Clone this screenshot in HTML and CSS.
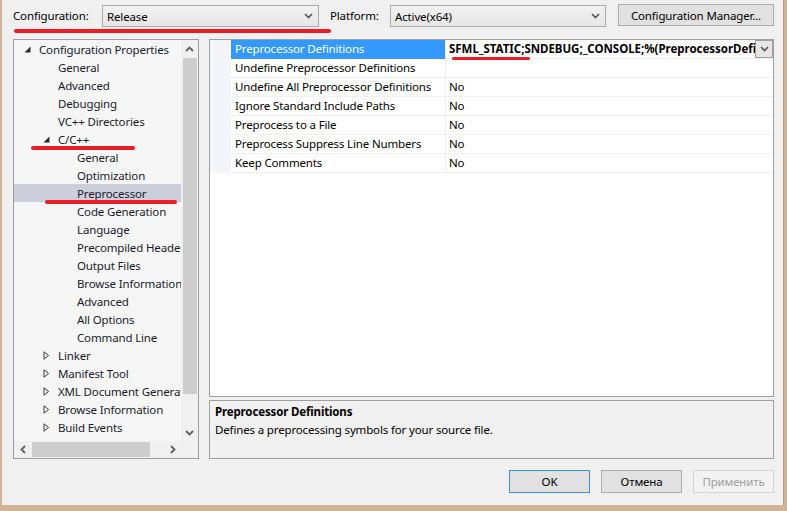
FILE: index.html
```html
<!DOCTYPE html>
<html>
<head>
<meta charset="utf-8">
<title>Property Pages</title>
<link rel="stylesheet" href="styles.css">
</head>
<body>
<div class="window">
  <div class="topbar">
    <span class="lbl lbl-config">Configuration:</span>
    <div class="combo combo-config">
      <span>Release</span>
      <svg class="chev" width="9" height="6" viewBox="0 0 9 6"><polyline points="1,1 4.5,4.5 8,1" fill="none" stroke="#555" stroke-width="1.6"/></svg>
    </div>
    <span class="lbl lbl-platform">Platform:</span>
    <div class="combo combo-platform">
      <span>Active(x64)</span>
      <svg class="chev" width="9" height="6" viewBox="0 0 9 6"><polyline points="1,1 4.5,4.5 8,1" fill="none" stroke="#555" stroke-width="1.6"/></svg>
    </div>
    <button class="btn btn-mgr">Configuration Manager...</button>
  </div>

  <div class="main">
    <div class="tree">
      <div class="tree-content">
        <div class="trow l1"><span class="exp"><svg width="7" height="7" viewBox="0 0 7 7"><polygon points="6.5,0.5 6.5,6.5 0.5,6.5" fill="#2a2a2a"/></svg></span><span>Configuration Properties</span></div>
        <div class="trow l2"><span class="exp"></span><span>General</span></div>
        <div class="trow l2"><span class="exp"></span><span>Advanced</span></div>
        <div class="trow l2"><span class="exp"></span><span>Debugging</span></div>
        <div class="trow l2"><span class="exp"></span><span>VC++ Directories</span></div>
        <div class="trow l2"><span class="exp"><svg width="7" height="7" viewBox="0 0 7 7"><polygon points="6.5,0.5 6.5,6.5 0.5,6.5" fill="#2a2a2a"/></svg></span><span>C/C++</span></div>
        <div class="trow l3"><span class="exp"></span><span>General</span></div>
        <div class="trow l3"><span class="exp"></span><span>Optimization</span></div>
        <div class="trow l3 sel"><span class="exp"></span><span>Preprocessor</span></div>
        <div class="trow l3"><span class="exp"></span><span>Code Generation</span></div>
        <div class="trow l3"><span class="exp"></span><span>Language</span></div>
        <div class="trow l3"><span class="exp"></span><span>Precompiled Headers</span></div>
        <div class="trow l3"><span class="exp"></span><span>Output Files</span></div>
        <div class="trow l3"><span class="exp"></span><span>Browse Information</span></div>
        <div class="trow l3"><span class="exp"></span><span>Advanced</span></div>
        <div class="trow l3"><span class="exp"></span><span>All Options</span></div>
        <div class="trow l3"><span class="exp"></span><span>Command Line</span></div>
        <div class="trow l2"><span class="exp"><svg width="7" height="9" viewBox="0 0 7 9"><polygon points="1,0.8 5.6,4.5 1,8.2" fill="none" stroke="#3a3a3a" stroke-width="1"/></svg></span><span>Linker</span></div>
        <div class="trow l2"><span class="exp"><svg width="7" height="9" viewBox="0 0 7 9"><polygon points="1,0.8 5.6,4.5 1,8.2" fill="none" stroke="#3a3a3a" stroke-width="1"/></svg></span><span>Manifest Tool</span></div>
        <div class="trow l2"><span class="exp"><svg width="7" height="9" viewBox="0 0 7 9"><polygon points="1,0.8 5.6,4.5 1,8.2" fill="none" stroke="#3a3a3a" stroke-width="1"/></svg></span><span>XML Document Generator</span></div>
        <div class="trow l2"><span class="exp"><svg width="7" height="9" viewBox="0 0 7 9"><polygon points="1,0.8 5.6,4.5 1,8.2" fill="none" stroke="#3a3a3a" stroke-width="1"/></svg></span><span>Browse Information</span></div>
        <div class="trow l2"><span class="exp"><svg width="7" height="9" viewBox="0 0 7 9"><polygon points="1,0.8 5.6,4.5 1,8.2" fill="none" stroke="#3a3a3a" stroke-width="1"/></svg></span><span>Build Events</span></div>
      </div>
      <div class="vscroll">
        <div class="arrow"><svg width="9" height="6" viewBox="0 0 9 6"><polyline points="1,5 4.5,1.5 8,5" fill="none" stroke="#606060" stroke-width="1.8"/></svg></div>
        <div class="vtrack"><div class="vthumb"></div></div>
        <div class="arrow"><svg width="9" height="6" viewBox="0 0 9 6"><polyline points="1,1 4.5,4.5 8,1" fill="none" stroke="#606060" stroke-width="1.8"/></svg></div>
      </div>
      <div class="hscroll">
        <div class="arrow"><svg width="6" height="9" viewBox="0 0 6 9"><polyline points="5,1 1.5,4.5 5,8" fill="none" stroke="#606060" stroke-width="1.8"/></svg></div>
        <div class="htrack"><div class="hthumb"></div></div>
        <div class="arrow"><svg width="6" height="9" viewBox="0 0 6 9"><polyline points="1,1 4.5,4.5 1,8" fill="none" stroke="#606060" stroke-width="1.8"/></svg></div>
      </div>
      <div class="corner"></div>
    </div>

    <div class="right">
      <div class="grid">
        <div class="grow hl"><div class="gut"></div><div class="gname">Preprocessor Definitions</div><div class="gval"><span class="vtext bold">SFML_STATIC;SNDEBUG;_CONSOLE;%(PreprocessorDefinitions)</span><span class="vbtn"><svg width="9" height="6" viewBox="0 0 9 6"><polyline points="1,1 4.5,4.5 8,1" fill="none" stroke="#555" stroke-width="1.6"/></svg></span></div></div>
        <div class="grow"><div class="gut"></div><div class="gname">Undefine Preprocessor Definitions</div><div class="gval"></div></div>
        <div class="grow"><div class="gut"></div><div class="gname">Undefine All Preprocessor Definitions</div><div class="gval">No</div></div>
        <div class="grow"><div class="gut"></div><div class="gname">Ignore Standard Include Paths</div><div class="gval">No</div></div>
        <div class="grow"><div class="gut"></div><div class="gname">Preprocess to a File</div><div class="gval">No</div></div>
        <div class="grow"><div class="gut"></div><div class="gname">Preprocess Suppress Line Numbers</div><div class="gval">No</div></div>
        <div class="grow"><div class="gut"></div><div class="gname">Keep Comments</div><div class="gval">No</div></div>
      </div>
      <div class="desc">
        <div class="desc-title">Preprocessor Definitions</div>
        <div class="desc-text">Defines a preprocessing symbols for your source file.</div>
      </div>
    </div>
  </div>

  <div class="footer">
    <button class="btn dlg default">OK</button>
    <button class="btn dlg">Отмена</button>
    <button class="btn dlg disabled">Применить</button>
  </div>

  <div class="mark mark-config"></div>
  <div class="mark mark-cpp"></div>
  <div class="mark mark-pre"></div>
  <div class="mark mark-sfml"></div>
</div>
</body>
</html>
```

FILE: styles.css
```css
* { box-sizing: border-box; }
html, body { margin: 0; padding: 0; }
body {
  background: #d1b396;
  width: 787px;
  height: 511px;
  overflow: hidden;
  font-family: "Noto Sans", "Open Sans", sans-serif;
  font-size: 11.5px;
  letter-spacing: -0.15px;
  color: #000;
}
.window {
  position: relative;
  margin-left: 2px;
  width: 782px;
  height: 505px;
  background: #f0f0f0;
  padding: 0 9px 0 11px;
  border-right: 1px solid #b89c80;
}

/* top bar */
.topbar {
  display: flex;
  align-items: flex-start;
  padding-top: 4px;
  height: 27px;
}
.lbl { line-height: 23px; white-space: nowrap; flex: none; }
.lbl-config { width: 89px; }
.lbl-platform { width: 60px; margin-left: 11px; }
.combo {
  flex: none;
  margin-top: 1px;
  height: 22px;
  border: 1px solid #acacac;
  background: linear-gradient(#f2f2f2, #e6e6e6);
  display: flex;
  align-items: center;
  justify-content: space-between;
  padding: 0 5px 0 4px;
}
.combo-config { width: 217px; }
.combo-platform { width: 216px; }
.btn {
  font-family: inherit;
  font-size: 11.5px;
  letter-spacing: -0.15px;
  color: #000;
  border: 1px solid #adadad;
  background: #e1e1e1;
  padding: 0;
  height: 22px;
}
.btn-mgr { width: 156px; margin-left: 12px; flex: none; }

/* main */
.main {
  display: flex;
  gap: 10px;
  margin-top: 12px;
  height: 420px;
}
.tree {
  flex: none;
  width: 186px;
  border: 1px solid #9a9ea6;
  display: grid;
  grid-template-columns: 167px 17px;
  grid-template-rows: 401px 17px;
  background: #f0f0f0;
}
.tree-content {
  background: #f6f6f6;
  overflow: hidden;
  white-space: nowrap;
}
.trow {
  height: 18px;
  display: flex;
  align-items: center;
  color: #1b1b2b;
}
.trow.l1 { padding-left: 6px; }
.trow.l2 { padding-left: 25px; }
.trow.l3 { padding-left: 44px; }
.trow.sel { background: #cccedb; }
.exp {
  width: 19px;
  flex: none;
  display: flex;
  align-items: center;
  padding-left: 4px;
}
.vscroll {
  display: flex;
  flex-direction: column;
  background: #f0f0f0;
}
.vscroll .arrow {
  height: 17px;
  display: flex;
  align-items: center;
  justify-content: center;
}
.vtrack { flex: 1; padding: 1px 1px 0 2px; }
.vthumb { height: 336px; background: #cdcdcd; }
.hscroll {
  display: flex;
  background: #f0f0f0;
}
.hscroll .arrow {
  width: 17px;
  display: flex;
  align-items: center;
  justify-content: center;
}
.htrack { flex: 1; padding: 1px 0 1px 1px; }
.hthumb { width: 118px; height: 100%; background: #cdcdcd; }
.corner { background: #f0f0f0; }

/* right */
.right {
  flex: 1;
  min-width: 0;
  display: flex;
  flex-direction: column;
  gap: 3px;
}
.grid {
  height: 358px;
  border: 1px solid #a0a0a0;
  background: #fff;
  overflow: hidden;
}
.grow {
  display: flex;
  height: 19px;
  white-space: nowrap;
}
.gut { width: 21px; background: #f2f5fa; flex: none; }
.gname {
  width: 215px;
  flex: none;
  padding-left: 4px;
  line-height: 18px;
  border-right: 1px solid #f0f0f0;
  border-bottom: 1px solid #f0f0f0;
  overflow: hidden;
}
.gval {
  flex: 1;
  min-width: 0;
  display: flex;
  padding-left: 3px;
  line-height: 18px;
  border-bottom: 1px solid #f0f0f0;
  overflow: hidden;
}
.grow.hl .gname { background: #3399ff; color: #fff; border-bottom-color: #3399ff; }
.vtext { flex: 1; min-width: 0; overflow: hidden; letter-spacing: -0.03px; }
.bold { font-weight: 700; }
.vbtn {
  width: 18px;
  height: 18px;
  flex: none;
  border: 1px solid #a0a0a0;
  background: #e6e6e6;
  display: flex;
  align-items: center;
  justify-content: center;
}
.desc {
  flex: 1;
  border: 1px solid #a0a0a0;
  background: #f0f0f0;
  padding: 2px 5px 1px;
}
.desc-title { font-weight: 700; line-height: 18px; }
.desc-text { line-height: 18px; }

/* footer */
.footer {
  display: flex;
  justify-content: flex-end;
  gap: 11px;
  margin-top: 11px;
}
.btn.dlg { width: 81px; height: 23px; }
.btn.default { border-color: #3c8fe0; }
.btn.disabled { color: #a0a0a0; border-color: #d5d5d5; background: #f2f2f2; }

/* red annotation strokes */
.mark {
  position: absolute;
  background: #ea1c24;
  border-radius: 2px;
  height: 4px;
}
.mark-config { left: 12px; top: 29px; width: 317px; }
.mark-cpp { left: 29px; top: 146px; width: 104px; }
.mark-pre { left: 43px; top: 200px; width: 132px; }
.mark-sfml { left: 450px; top: 57px; width: 78px; height: 3px; }
```
